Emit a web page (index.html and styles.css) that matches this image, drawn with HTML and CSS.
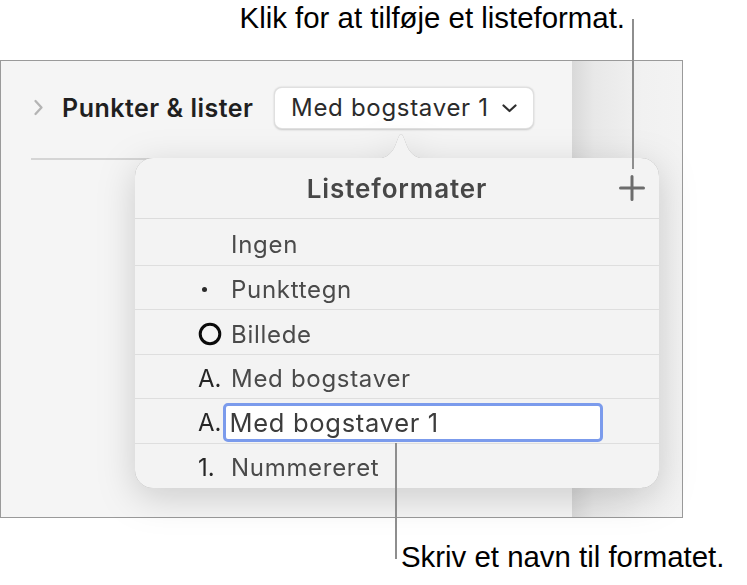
FILE: index.html
```html
<!DOCTYPE html>
<html lang="da">
<head>
<meta charset="utf-8">
<title>Listeformater</title>
<link rel="stylesheet" href="styles.css">
</head>
<body>
<div class="page">
  <p class="note note-top">Klik for at tilføje et listeformat.</p>

  <div class="frame">
    <div class="main">
      <div class="section-head">
        <svg class="disclosure" width="11" height="17" viewBox="0 0 11 17"><path d="M2.5 2 L8.5 8.5 L2.5 15" fill="none" stroke="#b4b4b4" stroke-width="2.3" stroke-linecap="round" stroke-linejoin="round"/></svg>
        <span class="section-title">Punkter &amp; lister</span>
        <button class="popup-btn" type="button">Med bogstaver 1<svg class="popup-chevron" width="15" height="9" viewBox="0 0 15 9"><path d="M1.5 1.5 L7.5 7 L13.5 1.5" fill="none" stroke="#2e2e2e" stroke-width="2.2" stroke-linecap="round" stroke-linejoin="round"/></svg></button>
      </div>
      <div class="rule"></div>
    </div>
    <div class="side"></div>
  </div>

  <p class="note note-bottom">Skriv et navn til formatet.</p>

  <div class="popover">
    <svg class="popover-arrow" width="56" height="29" viewBox="0 0 56 29"><path d="M0 29 C12 29 18 25 22 16 L25.5 7 Q28 1 30.5 7 L34 16 C38 25 44 29 56 29 Z" fill="#f3f3f3"/></svg>
    <div class="popover-body">
      <div class="pop-head">
        <span class="pop-title">Listeformater</span>
        <svg class="pop-add" width="26" height="26" viewBox="0 0 26 26"><path d="M13 1.5 V24.5 M1.5 13 H24.5" stroke="#6c6c6c" stroke-width="3" stroke-linecap="round"/></svg>
      </div>
      <ul class="rows">
        <li class="row"><span class="marker"></span><span class="label">Ingen</span></li>
        <li class="row"><span class="marker"><span class="dot"></span></span><span class="label">Punkttegn</span></li>
        <li class="row"><span class="marker"><svg class="ring" width="24" height="24" viewBox="0 0 24 24"><circle cx="12" cy="12" r="9.8" fill="none" stroke="#0a0a0a" stroke-width="3"/></svg></span><span class="label">Billede</span></li>
        <li class="row"><span class="marker">A.</span><span class="label">Med bogstaver</span></li>
        <li class="row"><span class="marker marker-tight">A.</span><input class="name-field" type="text" value="Med bogstaver 1"></li>
        <li class="row"><span class="marker">1.</span><span class="label">Nummereret</span></li>
      </ul>
    </div>
  </div>

  <div class="leader leader-top"></div>
  <div class="leader leader-bottom"></div>
</div>
</body>
</html>
```
FILE: styles.css
```css
* { box-sizing: border-box; }

html, body {
  margin: 0;
  padding: 0;
  background: #ffffff;
}

body {
  width: 747px;
  height: 585px;
  overflow: hidden;
  font-family: Inter, "Noto Sans", sans-serif;
}

.page {
  position: relative;
  width: 747px;
  height: 585px;
}

/* callout captions */
.note {
  margin: 0;
  font-family: "Liberation Sans", Arial, sans-serif;
  font-size: 29.4px;
  line-height: 29px;
  color: #000;
}

.note-top {
  height: 60px;
  padding-top: 3px;
  padding-right: 122px;
  text-align: right;
}

.note-bottom {
  margin-top: 24px;
  padding-left: 401px;
}

/* inspector frame */
.frame {
  display: flex;
  width: 683px;
  height: 458px;
  border: 1.5px solid #9a9a9a;
  background: #f5f5f5;
}

.main {
  flex: 1;
}

.side {
  width: 110px;
  background: linear-gradient(to right, #d9d9d9 0, #e8e8e8 22px, #f1f1f1 70px, #f3f3f3 100%);
}

.section-head {
  display: flex;
  align-items: center;
  height: 42px;
  margin-top: 25.5px;
  margin-bottom: 29.5px;
  padding-left: 32px;
}

.disclosure {
  flex: none;
  margin-right: 18px;
}

.section-title {
  width: 212px;
  font-size: 25px;
  font-weight: 600;
  letter-spacing: 0.5px;
  color: #1f1f1f;
}

.popup-btn {
  display: flex;
  align-items: center;
  gap: 13px;
  width: 260px;
  height: 42px;
  padding: 0 0 0 16px;
  border: 0.5px solid rgba(0, 0, 0, 0.12);
  border-radius: 8px;
  background: #ffffff;
  box-shadow: 0 0.5px 2px rgba(0, 0, 0, 0.18);
  font-family: inherit;
  font-size: 24px;
  letter-spacing: 0.7px;
  color: #2b2b2b;
}

.popup-chevron {
  flex: none;
  margin-top: 2px;
}

.rule {
  height: 1.5px;
  margin-left: 29.5px;
  background: #d5d5d5;
}

/* popover */
.popover {
  position: absolute;
  left: 135px;
  top: 158px;
  width: 524px;
  height: 330px;
  filter: drop-shadow(0 0 0.6px rgba(0, 0, 0, 0.35)) drop-shadow(0 9px 18px rgba(0, 0, 0, 0.17));
}

.popover-arrow {
  position: absolute;
  left: 238px;
  top: -28px;
}

.popover-body {
  display: flex;
  flex-direction: column;
  height: 100%;
  border-radius: 18px;
  background: #f3f3f3;
  overflow: hidden;
}

.pop-head {
  display: grid;
  grid-template-columns: 1fr auto 1fr;
  align-items: center;
  height: 61px;
  border-bottom: 1.5px solid #dcdcdc;
}

.pop-title {
  grid-column: 2;
  font-size: 26px;
  font-weight: 600;
  letter-spacing: 0.9px;
  color: #474747;
}

.pop-add {
  grid-column: 3;
  justify-self: end;
  margin-right: 14px;
}

.rows {
  margin: 0;
  padding: 0;
  list-style: none;
}

.row {
  display: flex;
  align-items: center;
  height: 44.4px;
  padding: 4px 0 0 63px;
  border-bottom: 1.5px solid #dedede;
  font-size: 24px;
  letter-spacing: 0.7px;
  color: #4a4a4a;
}

.row:first-child {
  height: 47px;
}

.row:last-child {
  border-bottom: 0;
}

.marker {
  display: flex;
  align-items: center;
  width: 33px;
  letter-spacing: 0;
  color: #262626;
}

.marker-tight {
  width: 25px;
}

.dot {
  width: 5px;
  height: 5px;
  margin-left: 4px;
  border-radius: 50%;
  background: #2a2a2a;
}

.ring {
  margin-left: 0;
}

.name-field {
  width: 380px;
  height: 39px;
  padding: 0 0 0 3.5px;
  border: 3.5px solid #7b9bec;
  border-radius: 5px;
  background: #ffffff;
  font-family: inherit;
  font-size: 25.5px;
  letter-spacing: 0.7px;
  color: #3c3c3c;
  outline: none;
}

/* callout leader lines */
.leader {
  position: absolute;
  width: 2px;
  background: #8e8e8e;
}

.leader-top {
  left: 632px;
  top: 19px;
  height: 150px;
}

.leader-bottom {
  left: 394.5px;
  top: 443px;
  height: 116px;
}
```
